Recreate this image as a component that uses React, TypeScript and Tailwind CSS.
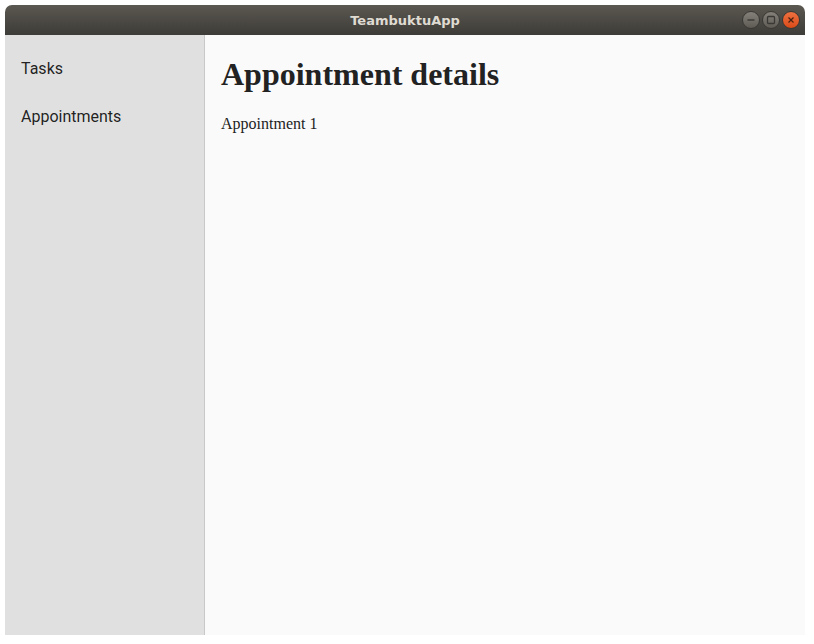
import React from "react";

function WinButton({ kind }: { kind: "min" | "max" | "close" }) {
  const isClose = kind === "close";
  return (
    <div
      className={
        isClose
          ? "w-[18px] h-[18px] rounded-full bg-gradient-to-b from-[#f0703f] to-[#d94b17] border border-[#3a3834] flex items-center justify-center"
          : "w-[18px] h-[18px] rounded-full bg-gradient-to-b from-[#85817a] to-[#5e5b55] border border-[#3a3834] flex items-center justify-center"
      }
    >
      <svg width="10" height="10" viewBox="0 0 10 10">
        {kind === "min" && <line x1="1.5" y1="5" x2="8.5" y2="5" stroke="#3a3834" strokeWidth="1.4" />}
        {kind === "max" && <rect x="1.5" y="1.5" width="7" height="7" rx="1" fill="none" stroke="#3a3834" strokeWidth="1.3" />}
        {kind === "close" && (
          <g stroke="#4a2010" strokeWidth="1.3">
            <line x1="2.5" y1="2.5" x2="7.5" y2="7.5" />
            <line x1="7.5" y1="2.5" x2="2.5" y2="7.5" />
          </g>
        )}
      </svg>
    </div>
  );
}

export default function App() {
  return (
    <div className="w-[814px] h-[644px] bg-white pt-[5px] pl-[5px]">
      <div className="w-[800px] h-[630px] flex flex-col">
        <div className="h-[30px] rounded-t-[7px] bg-gradient-to-b from-[#5b5851] to-[#3e3c38] relative flex items-center justify-center">
          <span
            className="text-[#dfdbd2] font-bold text-[13px] leading-none"
            style={{ fontFamily: '"DejaVu Sans", sans-serif' }}
          >
            TeambuktuApp
          </span>
          <div className="absolute right-[5px] top-[6px] flex gap-[2px]">
            <WinButton kind="min" />
            <WinButton kind="max" />
            <WinButton kind="close" />
          </div>
        </div>
        <div className="flex h-[600px]">
          <div
            className="w-[200px] bg-[#e0e0e0] border-r border-[#c8c8c8] pt-[10px] text-[16px] text-[rgba(0,0,0,0.87)]"
            style={{ fontFamily: 'Roboto, "Noto Sans", sans-serif' }}
          >
            <div className="h-[48px] px-[16px] flex items-center">Tasks</div>
            <div className="h-[48px] px-[16px] flex items-center">Appointments</div>
          </div>
          <div
            className="flex-1 bg-[#fafafa] px-[16px] text-[#222222] overflow-hidden"
            style={{ fontFamily: '"Liberation Serif", serif' }}
          >
            <h1 className="text-[32px] font-bold leading-[normal] mt-[21.44px] mb-[21.44px]">Appointment details</h1>
            <p className="text-[16px] leading-[normal]">Appointment 1</p>
          </div>
        </div>
      </div>
    </div>
  );
}
